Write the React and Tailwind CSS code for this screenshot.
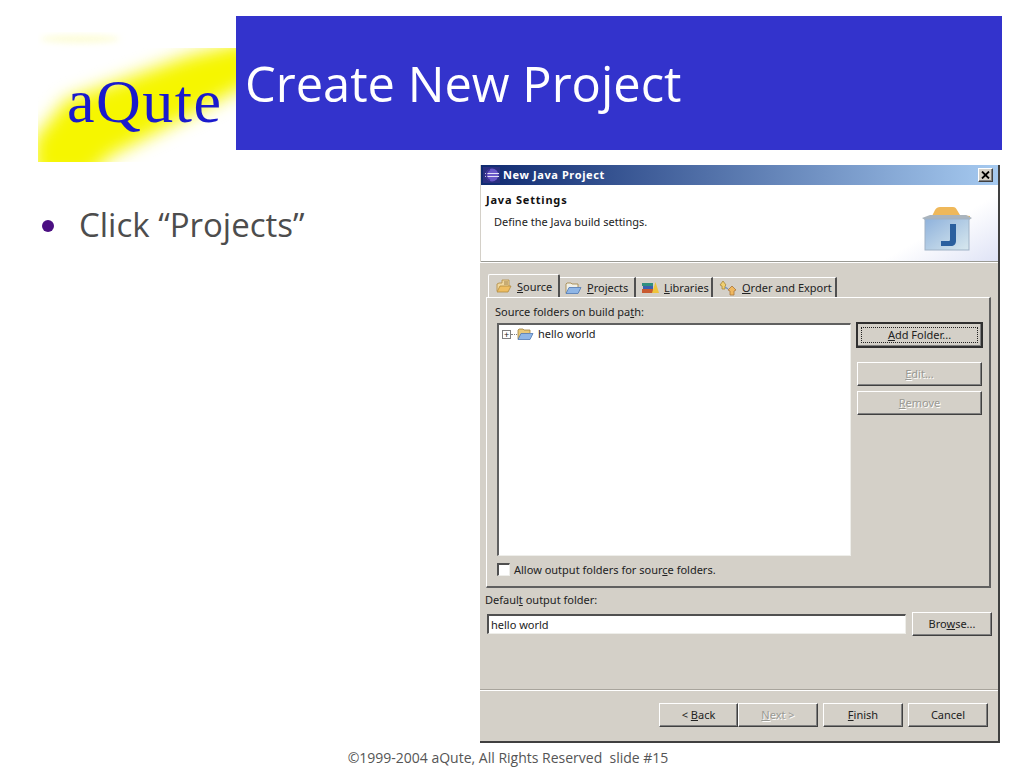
import React from 'react';

const raised = 'bg-[#d4d0c8] border border-t-white border-l-white border-r-[#404040] border-b-[#404040] shadow-[inset_-1px_-1px_0_#808080]';

function Logo() {
  return (
    <div className="relative w-[198px] h-[130px] mt-[16px] shrink-0 overflow-hidden">
      <svg width="198" height="130" viewBox="0 0 198 130" className="block">
        <defs>
          <filter id="logoblur" x="-20%" y="-40%" width="140%" height="180%">
            <feGaussianBlur stdDeviation="9" />
          </filter>
          <filter id="streakblur" x="-20%" y="-100%" width="140%" height="300%">
            <feGaussianBlur stdDeviation="3" />
          </filter>
          <clipPath id="logoclip">
            <rect x="0" y="16" width="198" height="114" />
          </clipPath>
        </defs>
        <ellipse cx="42" cy="7" rx="40" ry="4" fill="#fdfdd8" filter="url(#streakblur)" />
        <g clipPath="url(#logoclip)">
          <polygon points="-4,108 28,68 90,46 150,24 215,8 215,50 150,84 72,124 50,146 -4,146" fill="#f6f600" filter="url(#logoblur)" />
        </g>
      </svg>
      <span className="absolute left-[29px] top-[34px] font-['Liberation_Serif',serif] text-[62px] leading-[70px] tracking-[1.5px] text-[#1a1acc]">aQute</span>
    </div>
  );
}

function EclipseIcon() {
  return (
    <svg width="17" height="16" viewBox="0 0 17 16" className="shrink-0">
      <rect width="17" height="16" fill="#2a2f80" />
      <circle cx="9" cy="8" r="6.500" fill="#6a58c8" />
      <path d="M2 6.500h14M2 9.500h14" stroke="#e4e0f6" strokeWidth="1" />
      <path d="M7 2.500a6 6 0 0 0 0 11" fill="none" stroke="#3a2f90" strokeWidth="1.500" />
    </svg>
  );
}

function CloseIcon() {
  return (
    <svg width="9" height="8" viewBox="0 0 9 8">
      <path d="M1 0.500l7 7M8 0.500l-7 7" stroke="#000" strokeWidth="1.800" />
    </svg>
  );
}

function JavaIcon() {
  return (
    <svg width="54" height="48" viewBox="0 0 54 48" className="shrink-0">
      <defs>
        <linearGradient id="jbox" x1="0" y1="0" x2="1" y2="1">
          <stop offset="0" stopColor="#8fb2dc" />
          <stop offset="1" stopColor="#d8e8ee" />
        </linearGradient>
      </defs>
      <path d="M12 12l3-6c1-2 3-3 5-3h13c2 0 3 1 4 3l3 5 10 1v3H4z" fill="#efb85a" />
      <path d="M2 14l8-3h36l6 3-3 2H5z" fill="#aab4bd" />
      <rect x="5" y="15" width="44" height="31" fill="url(#jbox)" stroke="#9fb2c6" />
      <path d="M30 20h6v17c0 3-2 5-5 5H21v-5h8c1 0 1-1 1-2z" fill="#2a5f9e" />
    </svg>
  );
}

function OpenFolder({ back = '#e8c878', front = '#8fb6e6' }) {
  return (
    <svg width="17" height="14" viewBox="0 0 17 14" className="shrink-0">
      <path d="M1 12V3l1-1h4l1 1h6v3" fill={back} stroke="#a08040" strokeWidth="0.800" />
      <path d="M1 12.500l3-6h12l-3 6z" fill={front} stroke="#4f78b4" strokeWidth="0.800" />
    </svg>
  );
}

function SourceIcon() {
  return (
    <svg width="16" height="15" viewBox="0 0 16 15" className="shrink-0">
      <path d="M1 12V5l2-1h3V1h7v6" fill="#f0d8a0" stroke="#b08a40" strokeWidth="0.800" />
      <path d="M8 3h4M8 5h4" stroke="#8a6a30" strokeWidth="0.800" />
      <path d="M1 13l3-6h11l-3 6z" fill="#efbe62" stroke="#b08a40" strokeWidth="0.800" />
    </svg>
  );
}

function BooksIcon() {
  return (
    <svg width="17" height="13" viewBox="0 0 17 13" className="shrink-0">
      <rect x="0" y="2" width="11" height="3" fill="#2f8f7f" />
      <rect x="1" y="5" width="10" height="3" fill="#3a5fb0" />
      <rect x="0" y="8" width="11" height="4" fill="#c85a30" />
      <path d="M10 12l3.500-11 3.500 11z" fill="#eec43c" />
    </svg>
  );
}

function KeysIcon() {
  return (
    <svg width="18" height="16" viewBox="0 0 18 16" className="shrink-0">
      <path d="M1 5l3-4 3 4-1 1v3H3V6z" fill="#f0d070" stroke="#a8863a" strokeWidth="0.800" />
      <path d="M9 10l4-4 4 4-2 1v4h-4v-4z" fill="#f0b860" stroke="#a8763a" strokeWidth="0.800" />
      <path d="M6 7l3 2" stroke="#7090c0" strokeWidth="1.200" />
    </svg>
  );
}

function Tab({ icon, first, rest, active, className }) {
  return (
    <div className={`flex items-center gap-[5px] ${className} ${active ? 'h-[23px] border-t border-l border-white border-r-2 border-r-[#505050] rounded-t-[2px] -mt-[1px]' : 'h-[20px] border-r-2 border-r-[#505050] border-t border-t-white'}`}>
      {icon}
      <span className="mt-[1px]"><u>{first}</u>{rest}</span>
    </div>
  );
}

function Btn({ className, disabled, focused, children }) {
  return (
    <div className={`${raised} flex items-center justify-center ${focused ? 'outline outline-2 -outline-offset-1 outline-[#303030]' : ''} ${disabled ? 'text-[#9a9a94] [text-shadow:1px_1px_0_#fff]' : 'text-[#222]'} ${className}`}>
      {children}
    </div>
  );
}

function Dialog() {
  return (
    <div className="w-[520px] h-[578px] flex flex-col bg-[#d4d0c8] border-r-2 border-b-2 border-[#404040] font-['Noto_Sans',sans-serif] text-[11px] leading-[14px] text-[#222]">
      <div className="h-[20px] ml-[1px] flex items-center pl-[2px] pr-[5px] bg-[linear-gradient(90deg,#0f2a70,#a6caf0)] text-white font-bold shrink-0">
        <EclipseIcon />
        <span className="ml-[3px] flex-1 tracking-[0.6px]">New Java Project</span>
        <div className={`${raised} w-[15px] h-[14px] flex items-center justify-center`}>
          <CloseIcon />
        </div>
      </div>

      <div className="h-[77px] ml-[1px] flex justify-between bg-[linear-gradient(150deg,#fff_82%,#dfe3f6)] border-b border-[#9a9a94] shrink-0 pl-[5px] pr-[24px]">
        <div className="pt-[8px]">
          <div className="font-bold text-[#111] tracking-[0.8px]">Java Settings</div>
          <div className="ml-[8px] mt-[8px]">Define the Java build settings.</div>
        </div>
        <div className="pt-[19px]"><JavaIcon /></div>
      </div>

      <div className="h-[1px] bg-white shrink-0" />

      <div className="flex-1 flex flex-col px-[6px] pt-[12px]">
        <div className="flex items-end h-[22px] pl-[2px]">
          <Tab active first="S" rest="ource" icon={<SourceIcon />} className="w-[72px] pl-[7px]" />
          <Tab first="P" rest="rojects" icon={<OpenFolder back="#f0f0e8" />} className="w-[76px] pl-[5px]" />
          <Tab first="L" rest="ibraries" icon={<BooksIcon />} className="w-[77px] pl-[6px] gap-[4px]" />
          <Tab first="O" rest="rder and Export" icon={<KeysIcon />} className="w-[124px] pl-[6px] gap-[4px]" />
        </div>

        <div className="w-[505px] h-[291px] border-t border-l border-white border-r-2 border-b-2 border-r-[#606060] border-b-[#606060] pl-[8px] pr-[5px] pt-[7px] flex flex-col">
          <div className="h-[14px]">Source folders on build pa<u>t</u>h:</div>
          <div className="flex mt-[4px] gap-[6px] ml-[2px]">
            <div className="w-[354px] h-[233px] bg-white border-t-2 border-l-2 border-t-[#606060] border-l-[#606060] border-r border-b border-r-[#eeeeea] border-b-[#eeeeea] pl-[3px] pt-[1px]">
              <div className="flex items-center h-[16px]">
                <div className="w-[9px] h-[9px] border border-[#808080] flex items-center justify-center text-[9px] leading-[7px]">+</div>
                <div className="w-[6px] border-t border-dotted border-[#808080]" />
                <OpenFolder />
                <span className="ml-[4px]">hello world</span>
              </div>
            </div>
            <div className="flex flex-col">
              <Btn focused className="w-[125px] h-[24px]">
                <span className="border border-dotted border-[#222] w-[117px] h-[16px] flex items-center justify-center"><span><u>A</u>dd Folder...</span></span>
              </Btn>
              <Btn disabled className="w-[125px] h-[24px] mt-[15px]"><span><u>E</u>dit...</span></Btn>
              <Btn disabled className="w-[125px] h-[24px] mt-[5px]"><span><u>R</u>emove</span></Btn>
            </div>
          </div>
          <div className="flex items-center mt-[6px] h-[14px] ml-[2px]">
            <div className="w-[13px] h-[13px] bg-white border-t-2 border-l-2 border-t-[#505050] border-l-[#505050] border-r border-b border-r-[#eeeeea] border-b-[#eeeeea]" />
            <span className="ml-[4px] mt-[1px]">Allow output folders for sour<u>c</u>e folders.</span>
          </div>
        </div>

        <div className="mt-[5px] h-[14px] -ml-[1px]">Defaul<u>t</u> output folder:</div>
        <div className="flex items-center mt-[5px]">
          <div className="w-[419px] h-[20px] ml-[1px] bg-white border-t-2 border-l-2 border-t-[#505050] border-l-[#505050] border-r border-b border-r-[#eeeeea] border-b-[#eeeeea] pl-[2px] flex items-center">hello world</div>
          <Btn className="w-[80px] h-[24px] ml-[6px]"><span>Bro<u>w</u>se...</span></Btn>
        </div>
      </div>

      <div className="h-[2px] border-t border-[#a8a49c] bg-white shrink-0" />
      <div className="h-[50px] flex items-start justify-end pt-[12px] pr-[10px] shrink-0">
        <Btn className="w-[79px] h-[24px]"><span>&lt; <u>B</u>ack</span></Btn>
        <Btn disabled className="w-[80px] h-[24px]"><span><u>N</u>ext &gt;</span></Btn>
        <Btn className="w-[80px] h-[24px] ml-[5px]"><span><u>F</u>inish</span></Btn>
        <Btn className="w-[80px] h-[24px] ml-[5px]">Cancel</Btn>
      </div>
    </div>
  );
}

export default function App() {
  return (
    <div className="w-[1024px] h-[768px] overflow-hidden bg-white flex flex-col font-['Open_Sans',sans-serif]">
      <div className="flex items-start pl-[38px] pt-[16px] h-[165px] shrink-0">
        <Logo />
        <div className="w-[766px] h-[134px] bg-[#3333cc] pl-[9px] pt-[33px] text-white text-[48.8px] leading-[68px]">Create New Project</div>
      </div>

      <div className="flex h-[578px] shrink-0">
        <div className="w-[480px] shrink-0 pl-[42px] pt-[38px] flex items-start">
          <div className="w-[12px] h-[12px] rounded-full bg-[#4b0f82] mt-[17px] shrink-0" />
          <div className="ml-[25px] text-[33px] leading-[44px] text-[#4d4d4d]">Click “Projects”</div>
        </div>
        <Dialog />
      </div>

      <div className="text-center text-[14px] leading-[20px] text-[#555] mt-[5px] pr-[8px] whitespace-pre">©1999-2004 aQute, All Rights Reserved  slide #15</div>
    </div>
  );
}
